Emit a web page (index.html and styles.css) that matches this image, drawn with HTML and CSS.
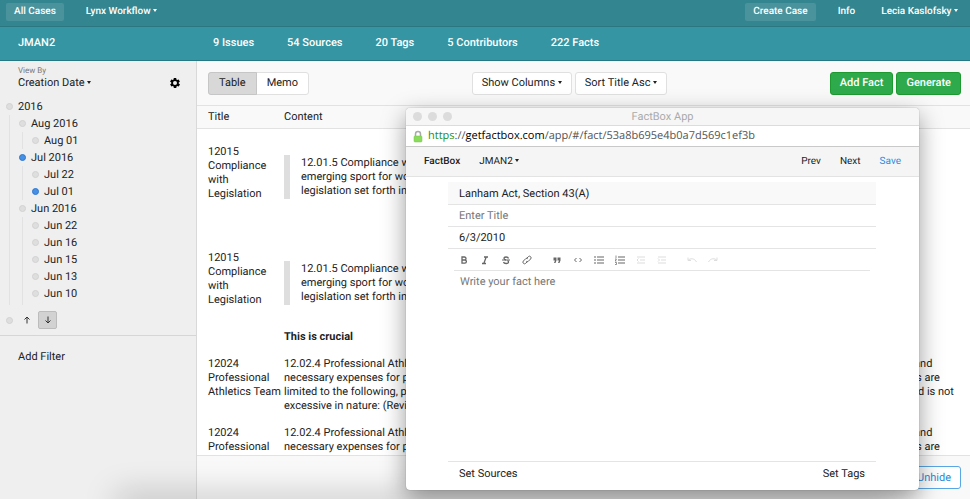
FILE: index.html
```html
<!DOCTYPE html>
<html lang="en">
<head>
    <meta charset="UTF-8">
    <meta name="viewport" content="width=device-width, initial-scale=1.0">
    <title>FactBox</title>
    <link rel="stylesheet" href="styles.css">
</head>
<body>
    <header>
        <nav class="topbar">
            <a href="#" class="nav-link boxed">All Cases</a>
            <button type="button" class="nav-link workflow">Lynx Workflow <span class="caret"></span></button>
            <a href="#" class="nav-link boxed create">Create Case</a>
            <a href="#" class="nav-link info">Info</a>
            <button type="button" class="nav-link user">Lecia Kaslofsky <span class="caret"></span></button>
        </nav>
        <nav class="casebar">
            <a href="#" class="case-name">JMAN2</a>
            <a href="#">9 Issues</a>
            <a href="#">54 Sources</a>
            <a href="#">20 Tags</a>
            <a href="#">5 Contributors</a>
            <a href="#">222 Facts</a>
        </nav>
    </header>

    <div class="main">
        <aside class="sidebar">
            <div class="view-by">
                <div>
                    <div class="small-label">View By</div>
                    <button type="button" class="plain">Creation Date <span class="caret"></span></button>
                </div>
                <button type="button" class="plain gear" aria-label="Settings">
                    <svg width="10" height="10" viewBox="2 2 20 20"><path fill="#000" fill-rule="evenodd" d="M19.4 13c0-.3.1-.6.1-1s0-.7-.1-1l2.1-1.6c.2-.2.2-.4.1-.6l-2-3.500c-.1-.2-.4-.3-.6-.2l-2.500 1c-.5-.4-1.100-.7-1.700-1L14.500 2.400c0-.2-.2-.4-.5-.4h-4c-.3 0-.5.2-.5.400L9.100 5.100c-.6.2-1.100.6-1.700 1l-2.500-1c-.2-.1-.5 0-.6.200l-2 3.500c-.1.200-.1.400.1.600L4.600 11c0 .3-.1.600-.1 1s0 .7.100 1l-2.100 1.600c-.2.200-.2.400-.1.600l2 3.500c.1.200.4.300.6.200l2.500-1c.5.400 1.100.7 1.700 1l.4 2.700c0 .2.200.4.5.4h4c.3 0 .5-.2.500-.4l.4-2.700c.6-.2 1.100-.6 1.700-1l2.500 1c.2.100.5 0 .6-.2l2-3.500c.1-.2.100-.4-.1-.6L19.400 13zM12 16a4 4 0 1 1 0-8 4 4 0 0 1 0 8z"/></svg>
                </button>
            </div>

            <ul class="tree">
                <li><a href="#"><i class="dot"></i>2016</a>
                    <ul>
                        <li><a href="#"><i class="dot"></i>Aug 2016</a>
                            <ul>
                                <li><a href="#"><i class="dot"></i>Aug 01</a></li>
                            </ul>
                        </li>
                        <li><a href="#"><i class="dot on"></i>Jul 2016</a>
                            <ul>
                                <li><a href="#"><i class="dot"></i>Jul 22</a></li>
                                <li><a href="#"><i class="dot on"></i>Jul 01</a></li>
                            </ul>
                        </li>
                        <li><a href="#"><i class="dot"></i>Jun 2016</a>
                            <ul>
                                <li><a href="#"><i class="dot"></i>Jun 22</a></li>
                                <li><a href="#"><i class="dot"></i>Jun 16</a></li>
                                <li><a href="#"><i class="dot"></i>Jun 15</a></li>
                                <li><a href="#"><i class="dot"></i>Jun 13</a></li>
                                <li><a href="#"><i class="dot"></i>Jun 10</a></li>
                                <li><a href="#"><i class="dot"></i>Jun 09</a></li>
                            </ul>
                        </li>
                    </ul>
                </li>
            </ul>

            <div class="sort">
                <i class="dot"></i>
                <button type="button" class="arrow" aria-label="Ascending">
                    <svg width="8" height="8" viewBox="0 0 8 8"><path d="M4 7.500V1M1.500 3.500L4 1l2.500 2.500" fill="none" stroke="#333"/></svg>
                </button>
                <button type="button" class="arrow active" aria-label="Descending">
                    <svg width="8" height="8" viewBox="0 0 8 8"><path d="M4 .5V7M1.500 4.500L4 7l2.500-2.500" fill="none" stroke="#333"/></svg>
                </button>
            </div>
            <button type="button" class="plain add-filter">Add Filter</button>
        </aside>

        <section class="facts">
            <div class="toolbar">
                <div class="toggle">
                    <button type="button" class="active">Table</button>
                    <button type="button">Memo</button>
                </div>
                <div class="group">
                    <button type="button" class="btn">Show Columns <span class="caret"></span></button>
                    <button type="button" class="btn">Sort Title Asc <span class="caret"></span></button>
                </div>
                <div class="group">
                    <button type="button" class="btn green">Add Fact</button>
                    <button type="button" class="btn green">Generate</button>
                </div>
            </div>

            <div class="table-wrap">
                <table>
                    <thead>
                        <tr><th class="col-title">Title</th><th>Content</th></tr>
                    </thead>
                    <tbody>
                        <tr>
                            <td>12015 Compliance with Legislation</td>
                            <td>
                                <blockquote>12.01.5 Compliance with Legislation for Emerging Sports. An institution that elects to sponsor an<br>emerging sport for women shall comply fully in that program with all applicable amateurism<br>legislation set forth in Bylaw 12.</blockquote>
                                <p>&nbsp;</p>
                            </td>
                        </tr>
                        <tr>
                            <td>12015 Compliance with Legislation</td>
                            <td>
                                <blockquote>12.01.5 Compliance with Legislation for Emerging Sports. An institution that elects to sponsor an<br>emerging sport for women shall comply fully in that program with all applicable amateurism<br>legislation set forth in Bylaw 12.</blockquote>
                                <p><b>This is crucial</b></p>
                            </td>
                        </tr>
                        <tr>
                            <td>12024 Professional Athletics Team</td>
                            <td>12.02.4 Professional Athletics Team. A professional team is any organized team that provides any of its players more than actual and<br>necessary expenses for participation on the team, unless otherwise permitted by NCAA legislation. Actual and necessary expenses are<br>limited to the following, provided the price of these items is commensurate with the fair market price in the locality of the player and is not<br>excessive in nature: (Revised: 4/25/02)</td>
                        </tr>
                        <tr>
                            <td>12024 Professional Athletics Team</td>
                            <td>12.02.4 Professional Athletics Team. A professional team is any organized team that provides any of its players more than actual and<br>necessary expenses for participation on the team, unless otherwise permitted by NCAA legislation. Actual and necessary expenses are<br>limited to the following, provided the price of these items is commensurate with the fair market price in the locality of the player and is not<br>excessive in nature: (Revised: 4/25/02)</td>
                        </tr>
                    </tbody>
                </table>
            </div>

            <footer>
                <button type="button" class="btn blue">Unhide</button>
            </footer>
        </section>
    </div>

    <div class="bottom-shadow"></div>

    <div class="popup">
        <div class="titlebar">
            <div class="lights"><i></i><i></i><i></i></div>
            <span>FactBox App</span>
        </div>
        <div class="urlbar">
            <svg width="10" height="13" viewBox="0 0 10 13"><path d="M2.500 7V4a2.500 2.500 0 0 1 5 0v3" fill="none" stroke="#aaa" stroke-width="1.500"/><rect x="1" y="6" width="8" height="6" rx="1" fill="#8bdc5c" stroke="#74c748" stroke-width=".5"/></svg>
            <span><span class="https">https</span>://<span class="host">getfactbox.com</span>/app/#/fact/53a8b695e4b0a7d569c1ef3b</span>
        </div>
        <nav class="popup-nav">
            <span class="brand">FactBox</span>
            <button type="button" class="plain">JMAN2 <span class="caret"></span></button>
            <a href="#" class="prev">Prev</a>
            <a href="#">Next</a>
            <a href="#" class="save">Save</a>
        </nav>
        <form class="fact-form">
            <input type="text" class="source" aria-label="Source" value="Lanham Act, Section 43(A)">
            <input type="text" aria-label="Title" placeholder="Enter Title">
            <input type="text" aria-label="Date" value="6/3/2010">
            <div class="editor-tools">
                <button type="button" class="tool" aria-label="Bold"><svg viewBox="0 0 10 10"><path d="M3 2h2.500a1.400 1.400 0 0 1 0 3H3zM3 5h2.800a1.500 1.500 0 0 1 0 3.200H3z" stroke-width="1.300"/></svg></button>
                <button type="button" class="tool" aria-label="Italic"><svg viewBox="0 0 10 10"><path d="M4 2h4M2 8.500h4M6.200 2l-2.400 6.500" stroke-width="1.300"/></svg></button>
                <button type="button" class="tool" aria-label="Strikethrough"><svg viewBox="0 0 10 10"><path d="M7.500 3.500C7 1.500 3 1.500 3 3.500c0 1 1 1.300 2 1.500M2.500 7c.5 2 5 2 5 0 0-.8-.4-1.200-1-1.500" stroke-width="1.300"/><path d="M1 5h8"/></svg></button>
                <button type="button" class="tool" aria-label="Link"><svg viewBox="0 0 10 10"><path d="M4.300 3.700l2-2a1.600 1.600 0 0 1 2.300 2.300L6.300 6.300a1.500 1.500 0 0 1-2 0M5.700 6.300l-2 2A1.600 1.600 0 0 1 1.400 6l2.300-2.300a1.500 1.500 0 0 1 2 0"/></svg></button>
                <button type="button" class="tool spaced" aria-label="Quote"><svg viewBox="0 0 10 10"><path class="fill" d="M1.500 2.500h3v3L3.500 8H2l1-2.500H1.500zM5.500 2.500h3v3L7.500 8H6l1-2.500H5.500z"/></svg></button>
                <button type="button" class="tool" aria-label="Code"><svg viewBox="0 0 10 10"><path d="M3.500 3L1.500 5l2 2M6.500 3l2 2-2 2"/></svg></button>
                <button type="button" class="tool" aria-label="Bulleted list"><svg viewBox="0 0 10 10"><path d="M3 2h7M3 5h7M3 8h7M0 2h2M0 5h2M0 8h2" stroke-width="1.200"/></svg></button>
                <button type="button" class="tool" aria-label="Numbered list"><svg viewBox="0 0 10 10"><path d="M3 2h7M3 5h7M3 8h7" stroke-width="1.200"/><path d="M1 .5v2.500M0 4h1.500L0 6h1.500M0 7.500h1.500v2H0" stroke-width=".7"/></svg></button>
                <button type="button" class="tool" aria-label="Outdent" disabled><svg viewBox="0 0 10 10"><path d="M1 2h8M4 5h5M1 8h8M2.500 3.500L1 5l1.500 1.500"/></svg></button>
                <button type="button" class="tool" aria-label="Indent" disabled><svg viewBox="0 0 10 10"><path d="M1 2h8M4 5h5M1 8h8M1 3.500L2.500 5 1 6.500"/></svg></button>
                <button type="button" class="tool spaced" aria-label="Undo" disabled><svg viewBox="0 0 10 10"><path d="M1 2.500v3h3M1 5.500C3 3 7.500 3 9.500 7"/></svg></button>
                <button type="button" class="tool" aria-label="Redo" disabled><svg viewBox="0 0 10 10"><path d="M9 2.500v3H6M9 5.500C7 3 2.500 3 .5 7"/></svg></button>
            </div>
            <textarea aria-label="Fact" placeholder="Write your fact here"></textarea>
            <div class="form-footer">
                <button type="button" class="plain">Set Sources</button>
                <button type="button" class="plain">Set Tags</button>
            </div>
        </form>
    </div>
</body>
</html>
```
FILE: styles.css
```css
* {
    box-sizing: border-box;
}

body {
    margin: 0;
    height: 100vh;
    display: flex;
    flex-direction: column;
    overflow: hidden;
    font-family: Roboto, Arial, sans-serif;
    font-size: 11px;
    line-height: 14px;
    color: #222;
    text-rendering: geometricPrecision;
}

a {
    color: inherit;
    text-decoration: none;
}

button, input, textarea {
    font: inherit;
    color: inherit;
    margin: 0;
    text-rendering: inherit;
}

button {
    cursor: pointer;
    white-space: nowrap;
}

.plain {
    background: none;
    border: none;
    padding: 0;
}

.caret {
    display: inline-block;
    border: 2px solid transparent;
    border-top: 3px solid currentColor;
    border-bottom: 0;
    vertical-align: 2px;
}

/* header */

.topbar {
    display: flex;
    align-items: center;
    height: 27px;
    padding: 0 4px 2px 6px;
    background: #338590;
    border-bottom: 1px solid #2b7681;
    color: #fff;
    font-size: 10px;
    font-weight: 500;
}

.nav-link {
    background: none;
    border: none;
    padding: 2px 8px;
    border-radius: 2px;
}

.boxed {
    background: #4a939d;
}

.workflow {
    margin-left: 14px;
}

.create {
    margin-left: auto;
}

.info {
    margin-left: 14px;
}

.user {
    margin-left: 10px;
}

.casebar {
    display: flex;
    align-items: center;
    gap: 33px;
    height: 34px;
    padding: 0 0 2px 18px;
    background: #3595a3;
    border-bottom: 1px solid #257985;
    color: #fff;
    font-weight: 500;
}

.case-name {
    width: 162px;
}

.main {
    flex: 1;
    display: flex;
    min-height: 0;
}

/* sidebar */

.sidebar {
    flex: none;
    width: 197px;
    background: #efefef;
    border-right: 1px solid #d9d9d9;
}

.view-by {
    display: flex;
    justify-content: space-between;
    align-items: flex-end;
    padding: 5px 16px 0 18px;
}

.small-label {
    font-size: 8px;
    line-height: 10px;
    color: #777;
}

.gear svg {
    display: block;
    margin-bottom: 2px;
}

.tree {
    height: 207px;
    margin: 8px 0 0;
    padding: 0;
    overflow: hidden;
    list-style: none;
    line-height: 17px;
}

.tree ul {
    margin: 0 0 0 9px;
    padding: 0 0 0 3px;
    border-left: 1px solid #e2e2e2;
    list-style: none;
}

.tree a {
    display: flex;
    align-items: center;
    gap: 5px;
    padding-left: 6px;
}

.dot {
    width: 7px;
    height: 7px;
    border-radius: 50%;
    background: #dedede;
    border: 1px solid #d2d2d2;
}

.dot.on {
    background: #4590e6;
    border-color: #2f78cc;
}

.sort {
    display: flex;
    align-items: center;
    padding: 6px;
    border-bottom: 1px solid #d6d6d6;
}

.arrow {
    display: flex;
    align-items: center;
    justify-content: center;
    width: 19px;
    height: 18px;
    margin-left: 4px;
    padding: 0;
    background: none;
    border: 1px solid transparent;
    border-radius: 2px;
}

.arrow.active {
    margin-left: 2px;
    background: #d2d2d2;
    border-color: #bcbcbc;
}

.add-filter {
    margin: 14px 18px;
}

/* facts */

.facts {
    flex: 1;
    min-width: 0;
    display: flex;
    flex-direction: column;
}

.toolbar {
    display: flex;
    align-items: center;
    justify-content: space-between;
    height: 45px;
    padding: 0 9px 0 11px;
    background: #f9f9f9;
    border-bottom: 1px solid #e2e2e2;
}

.group {
    display: flex;
    gap: 3px;
}

.btn, .toggle {
    height: 23px;
    background: #fff;
    border: 1px solid #e0e0e0;
    border-radius: 3px;
}

.btn {
    padding: 0 9px;
}

.btn.green {
    background: #2eaa4c;
    border-color: #1d9a2f;
    color: #fff;
    font-weight: 500;
}

.btn.blue {
    border-color: #5aa7e6;
    color: #2a8ddb;
}

.toggle {
    display: flex;
}

.toggle button {
    margin: -1px 0;
    padding: 0 10px;
    background: none;
    border: none;
}

.toggle .active {
    margin-left: -1px;
    background: #d8d8d8;
    border: 1px solid #c6c6c6;
    border-radius: 3px 0 0 3px;
}

.table-wrap {
    flex: 1;
    min-height: 0;
    overflow: hidden;
}

table {
    width: 100%;
    border-collapse: collapse;
    table-layout: fixed;
}

th {
    height: 22px;
    padding: 0;
    background: #f9f9f9;
    border-bottom: 1px solid #e2e2e2;
    font-weight: 400;
    text-align: left;
}

.col-title {
    width: 87px;
}

th:first-child, td:first-child {
    padding-left: 11px;
}

tbody::before {
    content: "";
    display: block;
    height: 10px;
}

td {
    padding: 6px 0 7px;
    vertical-align: top;
}

td:last-child {
    white-space: nowrap;
}

blockquote {
    margin: 10px 0 25px;
    padding: 1px 0 1px 11px;
    border-left: 6px solid #dedede;
}

p {
    margin: 0;
}

footer {
    display: flex;
    align-items: center;
    justify-content: flex-end;
    height: 44px;
    padding: 0 9px;
    background: #f9f9f9;
    border-top: 1px solid #e2e2e2;
}

/* popup window */

.bottom-shadow {
    position: absolute;
    left: 120px;
    right: 80px;
    bottom: -10px;
    height: 10px;
    box-shadow: 0 0 32px 4px rgba(0, 0, 0, 0.25);
}

.popup {
    position: absolute;
    top: 108px;
    left: 406px;
    right: 51px;
    bottom: 9px;
    display: flex;
    flex-direction: column;
    background: #fff;
    border-radius: 4px;
    box-shadow: 0 0 1px rgba(0, 0, 0, 0.5), 0 8px 24px rgba(0, 0, 0, 0.4);
    overflow: hidden;
}

.titlebar {
    display: grid;
    grid-template-columns: 1fr auto 1fr;
    align-items: center;
    height: 18px;
    padding: 0 7px;
    background: #f6f6f6;
    border-bottom: 1px solid #dcdcdc;
    color: #aaa;
}

.lights {
    display: flex;
    gap: 6px;
}

.lights i {
    width: 9px;
    height: 9px;
    border-radius: 50%;
    background: #dcdcdc;
}

.urlbar {
    display: flex;
    align-items: center;
    gap: 5px;
    height: 21px;
    padding: 0 7px;
    border-bottom: 1px solid #c9c9c9;
    font-family: "Open Sans", sans-serif;
    color: #555;
}

.https {
    color: #1a8f1a;
}

.host {
    color: #000;
}

.popup-nav {
    display: flex;
    align-items: center;
    gap: 19px;
    height: 30px;
    padding: 0 18px;
    background: #f5f5f5;
    border-bottom: 1px solid #e3e3e3;
    font-size: 10px;
}

.brand {
    font-weight: 500;
}

.prev {
    margin-left: auto;
}

.save {
    color: #2a8ddb;
}

.fact-form {
    flex: 1;
    display: flex;
    flex-direction: column;
    padding: 5px 43px 0 42px;
}

.fact-form input {
    height: 22px;
    padding: 0 11px;
    background: none;
    border: none;
    border-bottom: 1px solid #e4e4e4;
}

.fact-form .source {
    height: 23px;
    background: #f9f9f9;
}

::placeholder {
    color: #777;
}

.editor-tools {
    display: flex;
    align-items: center;
    gap: 11px;
    height: 22px;
    margin: 0 6px;
    padding-left: 5px;
    border-bottom: 1px solid #e4e4e4;
}

.tool {
    width: 10px;
    height: 10px;
    padding: 0;
    background: none;
    border: none;
    color: #666;
}

.tool svg {
    display: block;
    fill: none;
    stroke: currentColor;
    stroke-width: 1;
}

.tool .fill {
    fill: currentColor;
    stroke: none;
}

.tool:disabled {
    color: #ddd;
}

.spaced {
    margin-left: 9px;
}

textarea {
    flex: 1;
    padding: 4px 12px;
    background: none;
    border: none;
    resize: none;
}

.form-footer {
    display: flex;
    justify-content: space-between;
    padding: 5px 11px 9px;
    border-top: 1px solid #e4e4e4;
}
```
